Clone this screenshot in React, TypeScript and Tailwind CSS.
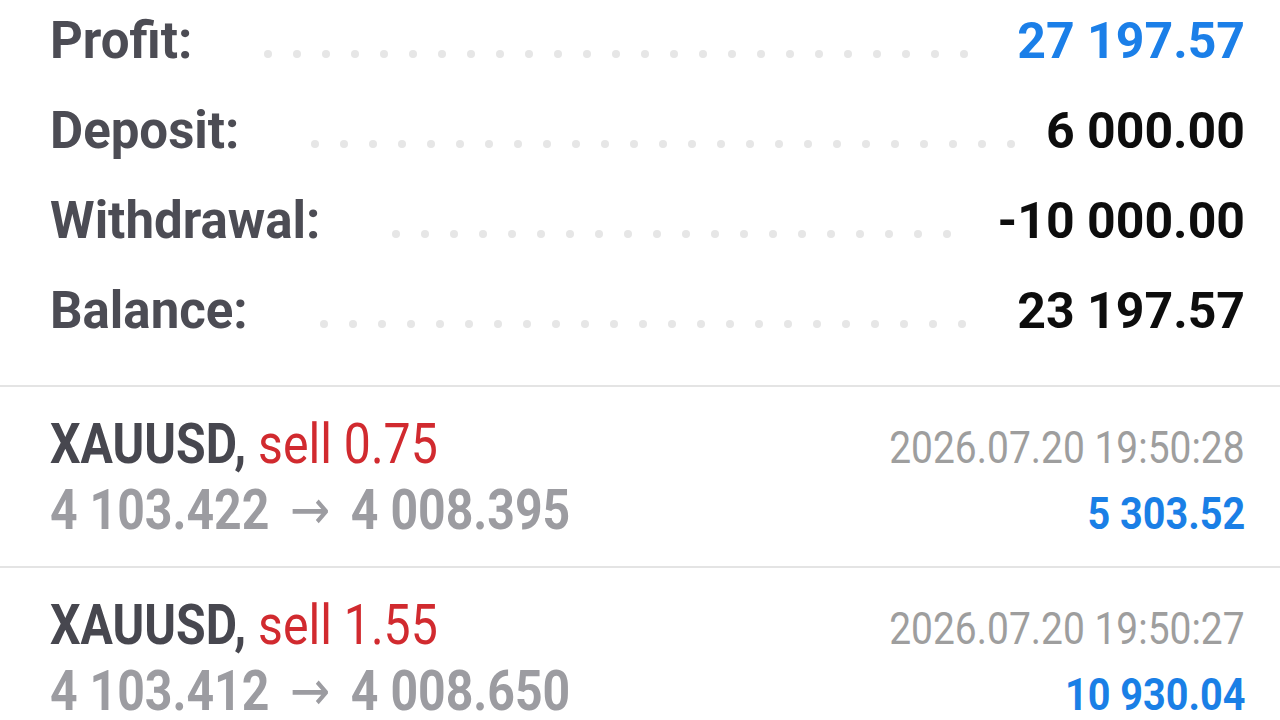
import React from "react";

type SummaryRow = {
  label: string;
  value: string;
  blue?: boolean;
};

type Deal = {
  symbol: string;
  side: string;
  open: string;
  close: string;
  time: string;
  profit: string;
};

const summary: SummaryRow[] = [
  { label: "Profit:", value: "27 197.57", blue: true },
  { label: "Deposit:", value: "6 000.00" },
  { label: "Withdrawal:", value: "-10 000.00" },
  { label: "Balance:", value: "23 197.57" },
];

const deals: Deal[] = [
  {
    symbol: "XAUUSD",
    side: "sell 0.75",
    open: "4 103.422",
    close: "4 008.395",
    time: "2026.07.20 19:50:28",
    profit: "5 303.52",
  },
  {
    symbol: "XAUUSD",
    side: "sell 1.55",
    open: "4 103.412",
    close: "4 008.650",
    time: "2026.07.20 19:50:27",
    profit: "10 930.04",
  },
];

const dots = Array.from({ length: 40 }, (_, i) => i);

function Leader() {
  // dots that don't fit wrap onto a hidden second line
  return (
    <div className="ml-[72px] mr-[30px] flex h-[11px] flex-1 flex-wrap content-start gap-x-[21px] gap-y-[30px] overflow-hidden">
      {dots.map((i) => (
        <span key={i} className="h-[8px] w-[8px] shrink-0 rounded-full bg-[#e6e6e6]" />
      ))}
    </div>
  );
}

function DealRow({ deal }: { deal: Deal }) {
  return (
    <div className="border-t-2 border-[#e4e4e4] pt-[27px] pb-[21px] pl-[50px] pr-[35px]">
      <div className="flex items-baseline justify-between leading-[61px]">
        <span className="inline-block origin-left scale-x-[0.86] whitespace-nowrap text-[56px] font-bold text-[#47474f]">
          {deal.symbol},{" "}
          <span className="font-normal text-[#d12a2f]">{deal.side}</span>
        </span>
        <span className="inline-block origin-right scale-x-[0.885] whitespace-nowrap text-[44px] text-[#9e9e9e]">
          {deal.time}
        </span>
      </div>
      <div className="flex items-baseline justify-between leading-[62px]">
        <span className="inline-block origin-left scale-x-[0.86] whitespace-nowrap text-[56px] font-bold text-[#9c9ca1]">
          {deal.open}{" "}
          <span className="mx-[10px] font-['DejaVu_Sans',sans-serif] font-normal">→</span>{" "}
          {deal.close}
        </span>
        <span className="inline-block origin-right scale-x-[0.9] whitespace-nowrap text-[44px] font-bold text-[#1a7fe6]">
          {deal.profit}
        </span>
      </div>
    </div>
  );
}

export default function App() {
  return (
    <div className="h-[720px] w-[1280px] overflow-hidden bg-white font-['Roboto',sans-serif]">
      <div className="-mt-1 pl-[50px] pr-[35px]">
        {summary.map((row) => (
          <div key={row.label} className="flex items-baseline font-bold leading-[90px]">
            <span className="text-[51px] text-[#4c4c54]">{row.label}</span>
            <Leader />
            <span className={row.blue ? "text-[50px] text-[#1b7fe8]" : "text-[50px] text-[#0d0d0d]"}>
              {row.value}
            </span>
          </div>
        ))}
      </div>
      <div className="mt-[29px]">
        {deals.map((deal) => (
          <DealRow key={deal.time} deal={deal} />
        ))}
      </div>
    </div>
  );
}
